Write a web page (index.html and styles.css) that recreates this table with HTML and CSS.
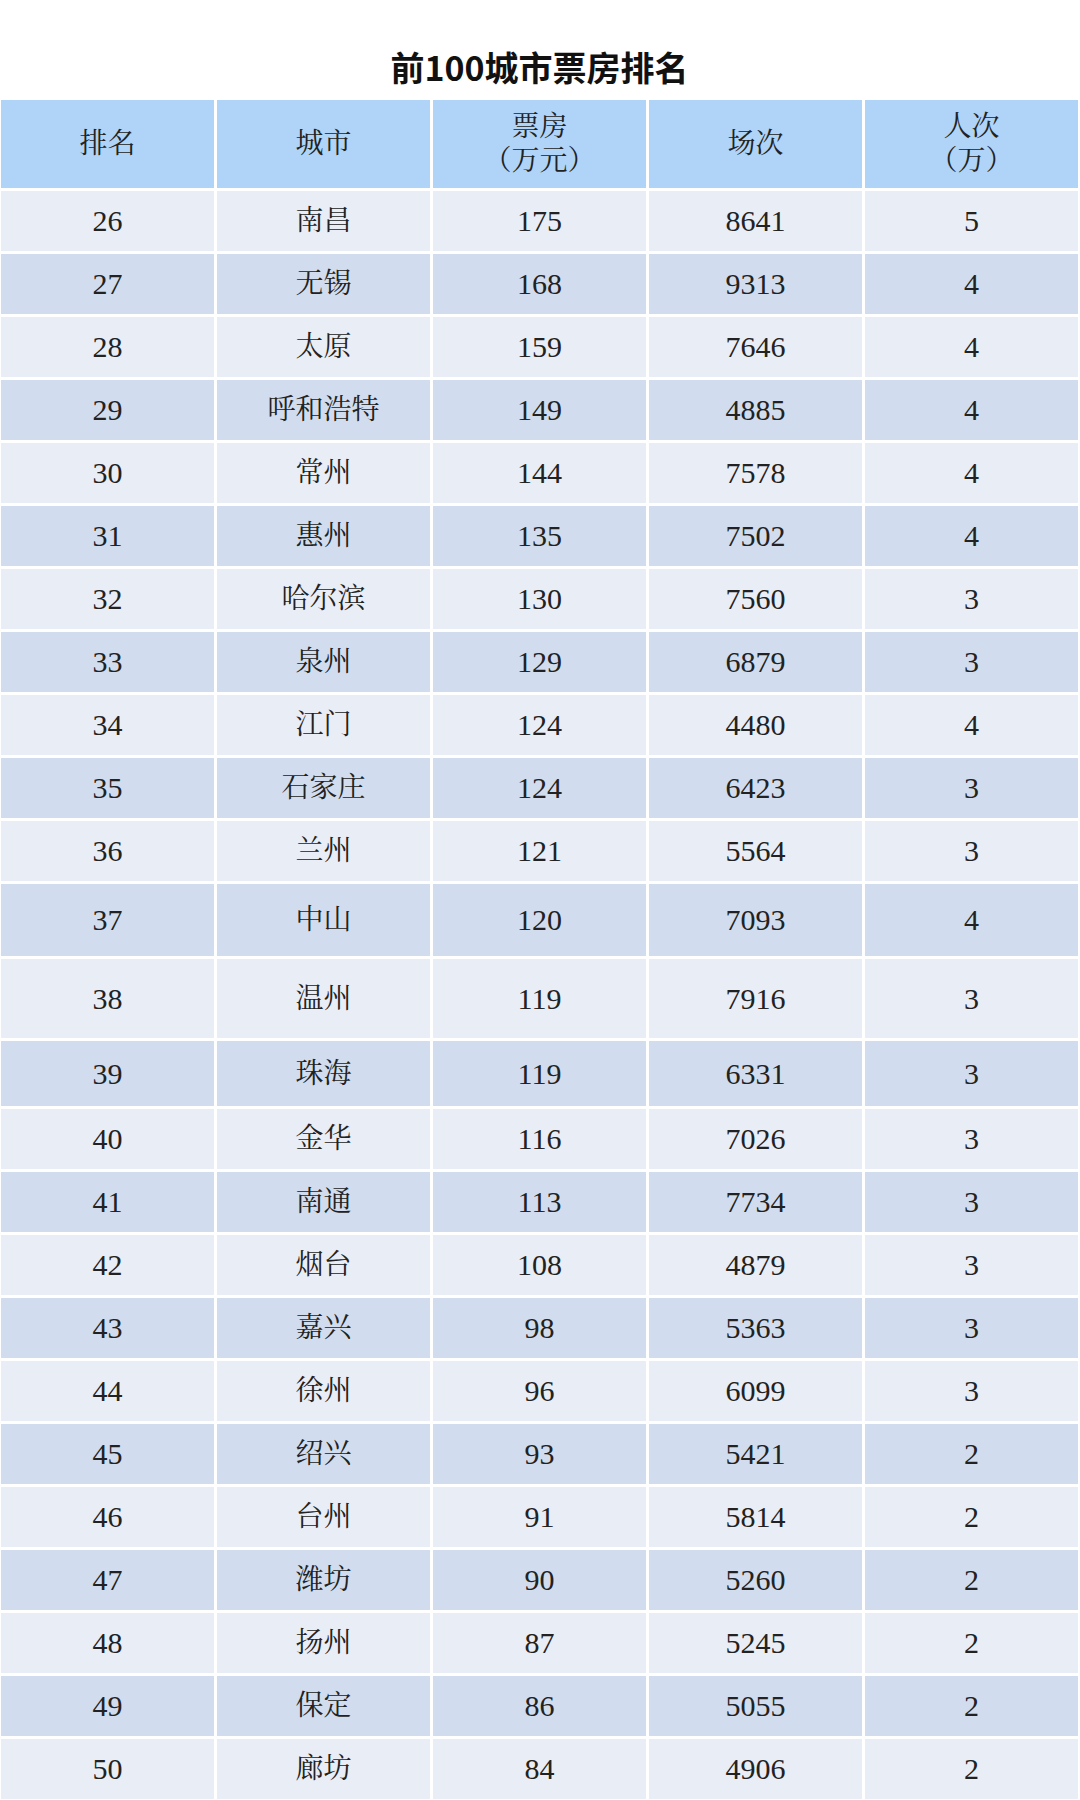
FILE: index.html
```html
<!DOCTYPE html>
<html lang="zh-CN">
<head>
<meta charset="utf-8">
<title>前100城市票房排名</title>
<link rel="stylesheet" href="styles.css">
</head>
<body>
<div class="page">
  <h1 class="title">前100城市票房排名</h1>
  <div class="table">
    <div class="row head">
      <div class="cell">排名</div>
      <div class="cell">城市</div>
      <div class="cell">票房<br>（万元）</div>
      <div class="cell">场次</div>
      <div class="cell">人次<br>（万）</div>
    </div>
    <div class="row light"><div class="cell">26</div><div class="cell">南昌</div><div class="cell">175</div><div class="cell">8641</div><div class="cell">5</div></div>
    <div class="row dark"><div class="cell">27</div><div class="cell">无锡</div><div class="cell">168</div><div class="cell">9313</div><div class="cell">4</div></div>
    <div class="row light"><div class="cell">28</div><div class="cell">太原</div><div class="cell">159</div><div class="cell">7646</div><div class="cell">4</div></div>
    <div class="row dark"><div class="cell">29</div><div class="cell">呼和浩特</div><div class="cell">149</div><div class="cell">4885</div><div class="cell">4</div></div>
    <div class="row light"><div class="cell">30</div><div class="cell">常州</div><div class="cell">144</div><div class="cell">7578</div><div class="cell">4</div></div>
    <div class="row dark"><div class="cell">31</div><div class="cell">惠州</div><div class="cell">135</div><div class="cell">7502</div><div class="cell">4</div></div>
    <div class="row light"><div class="cell">32</div><div class="cell">哈尔滨</div><div class="cell">130</div><div class="cell">7560</div><div class="cell">3</div></div>
    <div class="row dark"><div class="cell">33</div><div class="cell">泉州</div><div class="cell">129</div><div class="cell">6879</div><div class="cell">3</div></div>
    <div class="row light"><div class="cell">34</div><div class="cell">江门</div><div class="cell">124</div><div class="cell">4480</div><div class="cell">4</div></div>
    <div class="row dark"><div class="cell">35</div><div class="cell">石家庄</div><div class="cell">124</div><div class="cell">6423</div><div class="cell">3</div></div>
    <div class="row light"><div class="cell">36</div><div class="cell">兰州</div><div class="cell">121</div><div class="cell">5564</div><div class="cell">3</div></div>
    <div class="row dark h72"><div class="cell">37</div><div class="cell">中山</div><div class="cell">120</div><div class="cell">7093</div><div class="cell">4</div></div>
    <div class="row light h79"><div class="cell">38</div><div class="cell">温州</div><div class="cell">119</div><div class="cell">7916</div><div class="cell">3</div></div>
    <div class="row dark h65"><div class="cell">39</div><div class="cell">珠海</div><div class="cell">119</div><div class="cell">6331</div><div class="cell">3</div></div>
    <div class="row light"><div class="cell">40</div><div class="cell">金华</div><div class="cell">116</div><div class="cell">7026</div><div class="cell">3</div></div>
    <div class="row dark"><div class="cell">41</div><div class="cell">南通</div><div class="cell">113</div><div class="cell">7734</div><div class="cell">3</div></div>
    <div class="row light"><div class="cell">42</div><div class="cell">烟台</div><div class="cell">108</div><div class="cell">4879</div><div class="cell">3</div></div>
    <div class="row dark"><div class="cell">43</div><div class="cell">嘉兴</div><div class="cell">98</div><div class="cell">5363</div><div class="cell">3</div></div>
    <div class="row light"><div class="cell">44</div><div class="cell">徐州</div><div class="cell">96</div><div class="cell">6099</div><div class="cell">3</div></div>
    <div class="row dark"><div class="cell">45</div><div class="cell">绍兴</div><div class="cell">93</div><div class="cell">5421</div><div class="cell">2</div></div>
    <div class="row light"><div class="cell">46</div><div class="cell">台州</div><div class="cell">91</div><div class="cell">5814</div><div class="cell">2</div></div>
    <div class="row dark"><div class="cell">47</div><div class="cell">潍坊</div><div class="cell">90</div><div class="cell">5260</div><div class="cell">2</div></div>
    <div class="row light"><div class="cell">48</div><div class="cell">扬州</div><div class="cell">87</div><div class="cell">5245</div><div class="cell">2</div></div>
    <div class="row dark"><div class="cell">49</div><div class="cell">保定</div><div class="cell">86</div><div class="cell">5055</div><div class="cell">2</div></div>
    <div class="row light"><div class="cell">50</div><div class="cell">廊坊</div><div class="cell">84</div><div class="cell">4906</div><div class="cell">2</div></div>
  </div>
</div>
</body>
</html>
```
FILE: styles.css
```css
html, body {
  margin: 0;
  padding: 0;
  background: #ffffff;
}

.page {
  width: 1080px;
  padding: 0 2px 0 1px;
  box-sizing: border-box;
}

.title {
  margin: 0;
  height: 100px;
  padding-top: 45px;
  box-sizing: border-box;
  font-family: "Noto Sans CJK SC", "Noto Sans", sans-serif;
  font-weight: 700;
  font-size: 34px;
  line-height: 44px;
  color: #111111;
  text-align: center;
}

.table {
  display: flex;
  flex-direction: column;
  row-gap: 3px;
}

.row {
  display: grid;
  grid-template-columns: repeat(5, 1fr);
  column-gap: 3px;
  height: 60px;
}

.row.head { height: 88px; }
.row.h72 { height: 72px; }
.row.h79 { height: 79px; }
.row.h65 { height: 65px; }

.cell {
  display: flex;
  align-items: center;
  justify-content: center;
  text-align: center;
  font-family: "Liberation Serif", "Noto Serif CJK SC", "Noto Sans CJK SC", serif;
  font-size: 30px;
  line-height: 34px;
  color: #222222;
}

.head .cell,
.row .cell:nth-child(2) {
  font-size: 28px;
}

.head .cell { background: #afd4f7; }
.light .cell { background: #e9edf6; }
.dark .cell { background: #d1ddee; }
```
